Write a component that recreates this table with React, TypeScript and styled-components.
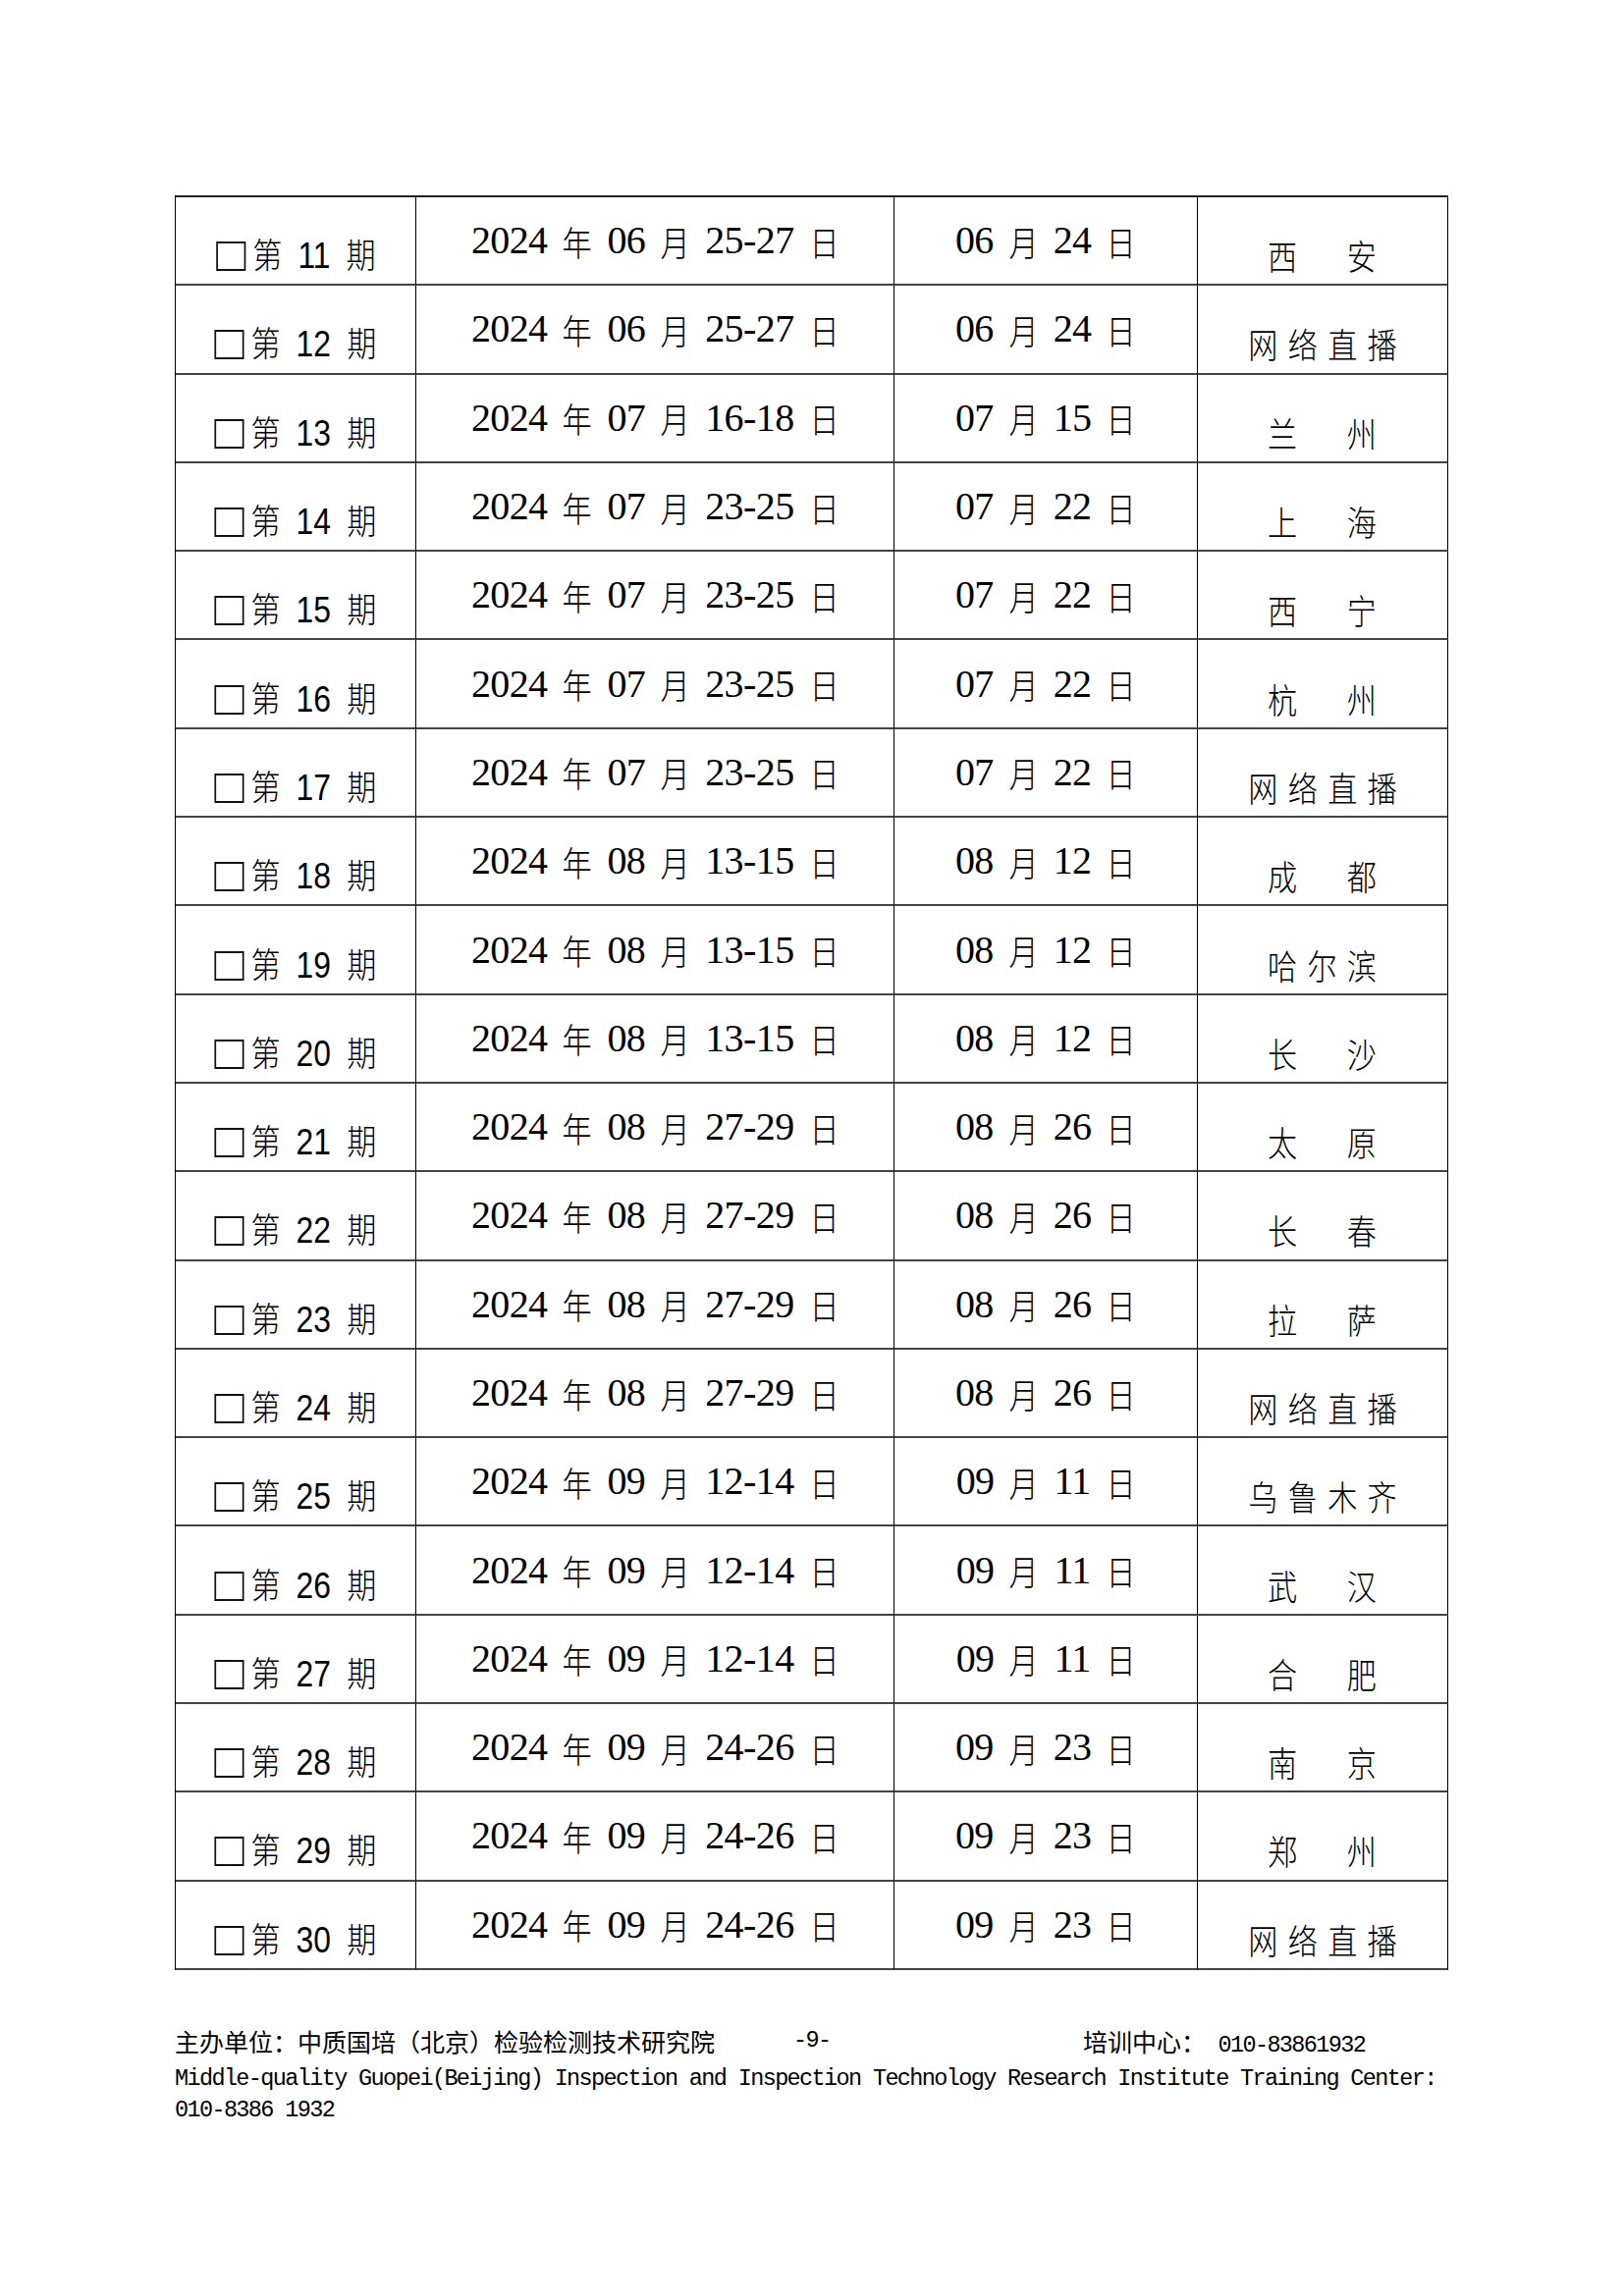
import React from "react";
import styled, { createGlobalStyle } from "styled-components";

const GlobalStyle = createGlobalStyle`
  html, body {
    margin: 0;
    padding: 0;
    background: #ffffff;
  }
  body {
    font-family: "Noto Sans CJK SC", sans-serif;
    color: #000;
  }
`;

const Page = styled.div`
  width: 1654px;
  min-height: 2339px;
  box-sizing: border-box;
  padding: 199px 0 0 178px;
  background: #fff;
`;

const Table = styled.div`
  width: 1297px;
  box-sizing: border-box;
  border-top: 2px solid #222;
  border-left: 1px solid #000;
`;

const Row = styled.div`
  display: grid;
  grid-template-columns: 245px 487px 309px 255px;
  height: 90.3px;
`;

const Cell = styled.div<{ $low?: boolean }>`
  box-sizing: border-box;
  display: flex;
  align-items: center;
  justify-content: center;
  border-right: 1px solid #000;
  border-bottom: 2px solid #444;
  padding-top: ${(p) => (p.$low ? "29px" : "0")};
  white-space: pre;
  color: #000;
`;

/* condensed CJK look: the original face is narrow and tall */
const Condensed = styled.span`
  display: inline-block;
  white-space: pre;
  transform: scaleX(0.86);
  transform-origin: center;
`;

const PeriodCell = styled(Cell)`
  font-family: "Noto Sans CJK SC", sans-serif;
  font-weight: 300;
  font-size: 35px;
  line-height: 1;
`;

const PeriodLine = styled(Condensed)`
  word-spacing: 11px;
`;

const CheckBox = styled.span`
  display: inline-block;
  width: 35px;
  height: 30px;
  box-sizing: border-box;
  border: 2px solid #111;
  border-left-width: 2.4px;
  border-right-width: 2.4px;
  margin-right: 8px;
  vertical-align: -3px;
`;

const PeriodNo = styled.span`
  font-family: "Liberation Sans", sans-serif;
  font-weight: 400;
  font-size: 37px;
  word-spacing: 0;
`;

const DateCell = styled(Cell)`
  font-family: "Liberation Serif", "Noto Sans CJK SC", serif;
  font-size: 40px;
  letter-spacing: -0.6px;
  word-spacing: 6px;
  line-height: 1;
`;

const Han = styled.span`
  display: inline-block;
  font-family: "Noto Sans CJK SC", sans-serif;
  font-weight: 300;
  font-size: 35px;
  line-height: 1;
  letter-spacing: 0;
  transform: scaleX(0.86);
  transform-origin: center;
  margin: 0 -2.45px;
  vertical-align: 2px;
`;

const PlaceCell = styled(Cell)`
  font-family: "Noto Sans CJK SC", sans-serif;
  font-weight: 300;
  font-size: 35px;
  line-height: 1;
`;

const PlaceText = styled(Condensed)`
  letter-spacing: 12px;
  padding-left: 12px;
`;

const Footer = styled.div`
  margin-top: 54px;
  width: 1320px;
`;

const FooterTop = styled.div`
  display: grid;
  grid-template-columns: 630px 295px auto;
  height: 36px;
  line-height: 36px;
  font-family: "Noto Sans CJK SC", sans-serif;
  font-size: 25px;
  white-space: pre;
`;

const Mono = styled.span`
  font-family: "Liberation Mono", monospace;
  font-size: 23.5px;
  letter-spacing: -1.63px;
`;

const FooterEn = styled.p`
  margin: 5px 0 0 0;
  width: 1300px;
  font-family: "Liberation Mono", monospace;
  font-size: 23.5px;
  letter-spacing: -1.63px;
  line-height: 32.5px;
`;

type Item = {
  no: number;
  month: string;
  range: string;
  regMonth: string;
  regDay: string;
  place: string;
};

const items: Item[] = [
  { no: 11, month: "06", range: "25-27", regMonth: "06", regDay: "24", place: "西　安" },
  { no: 12, month: "06", range: "25-27", regMonth: "06", regDay: "24", place: "网络直播" },
  { no: 13, month: "07", range: "16-18", regMonth: "07", regDay: "15", place: "兰　州" },
  { no: 14, month: "07", range: "23-25", regMonth: "07", regDay: "22", place: "上　海" },
  { no: 15, month: "07", range: "23-25", regMonth: "07", regDay: "22", place: "西　宁" },
  { no: 16, month: "07", range: "23-25", regMonth: "07", regDay: "22", place: "杭　州" },
  { no: 17, month: "07", range: "23-25", regMonth: "07", regDay: "22", place: "网络直播" },
  { no: 18, month: "08", range: "13-15", regMonth: "08", regDay: "12", place: "成　都" },
  { no: 19, month: "08", range: "13-15", regMonth: "08", regDay: "12", place: "哈尔滨" },
  { no: 20, month: "08", range: "13-15", regMonth: "08", regDay: "12", place: "长　沙" },
  { no: 21, month: "08", range: "27-29", regMonth: "08", regDay: "26", place: "太　原" },
  { no: 22, month: "08", range: "27-29", regMonth: "08", regDay: "26", place: "长　春" },
  { no: 23, month: "08", range: "27-29", regMonth: "08", regDay: "26", place: "拉　萨" },
  { no: 24, month: "08", range: "27-29", regMonth: "08", regDay: "26", place: "网络直播" },
  { no: 25, month: "09", range: "12-14", regMonth: "09", regDay: "11", place: "乌鲁木齐" },
  { no: 26, month: "09", range: "12-14", regMonth: "09", regDay: "11", place: "武　汉" },
  { no: 27, month: "09", range: "12-14", regMonth: "09", regDay: "11", place: "合　肥" },
  { no: 28, month: "09", range: "24-26", regMonth: "09", regDay: "23", place: "南　京" },
  { no: 29, month: "09", range: "24-26", regMonth: "09", regDay: "23", place: "郑　州" },
  { no: 30, month: "09", range: "24-26", regMonth: "09", regDay: "23", place: "网络直播" },
];

export default function App() {
  return (
    <>
      <GlobalStyle />
      <Page>
        <Table>
          {items.map((it) => (
            <Row key={it.no}>
              <PeriodCell $low>
                <PeriodLine>
                  <CheckBox />
                  {"第 "}
                  <PeriodNo>{it.no}</PeriodNo>
                  {" 期"}
                </PeriodLine>
              </PeriodCell>
              <DateCell>
                {"2024 "}
                <Han>年</Han>
                {` ${it.month} `}
                <Han>月</Han>
                {` ${it.range} `}
                <Han>日</Han>
              </DateCell>
              <DateCell>
                {`${it.regMonth} `}
                <Han>月</Han>
                {` ${it.regDay} `}
                <Han>日</Han>
              </DateCell>
              <PlaceCell $low>
                <PlaceText>{it.place}</PlaceText>
              </PlaceCell>
            </Row>
          ))}
        </Table>
        <Footer>
          <FooterTop>
            <span>主办单位：中质国培（北京）检验检测技术研究院</span>
            <Mono>-9-</Mono>
            <span>
              培训中心：<Mono> 010-83861932</Mono>
            </span>
          </FooterTop>
          <FooterEn>
            Middle-quality Guopei(Beijing) Inspection and Inspection Technology Research Institute Training Center: 010-8386 1932
          </FooterEn>
        </Footer>
      </Page>
    </>
  );
}
